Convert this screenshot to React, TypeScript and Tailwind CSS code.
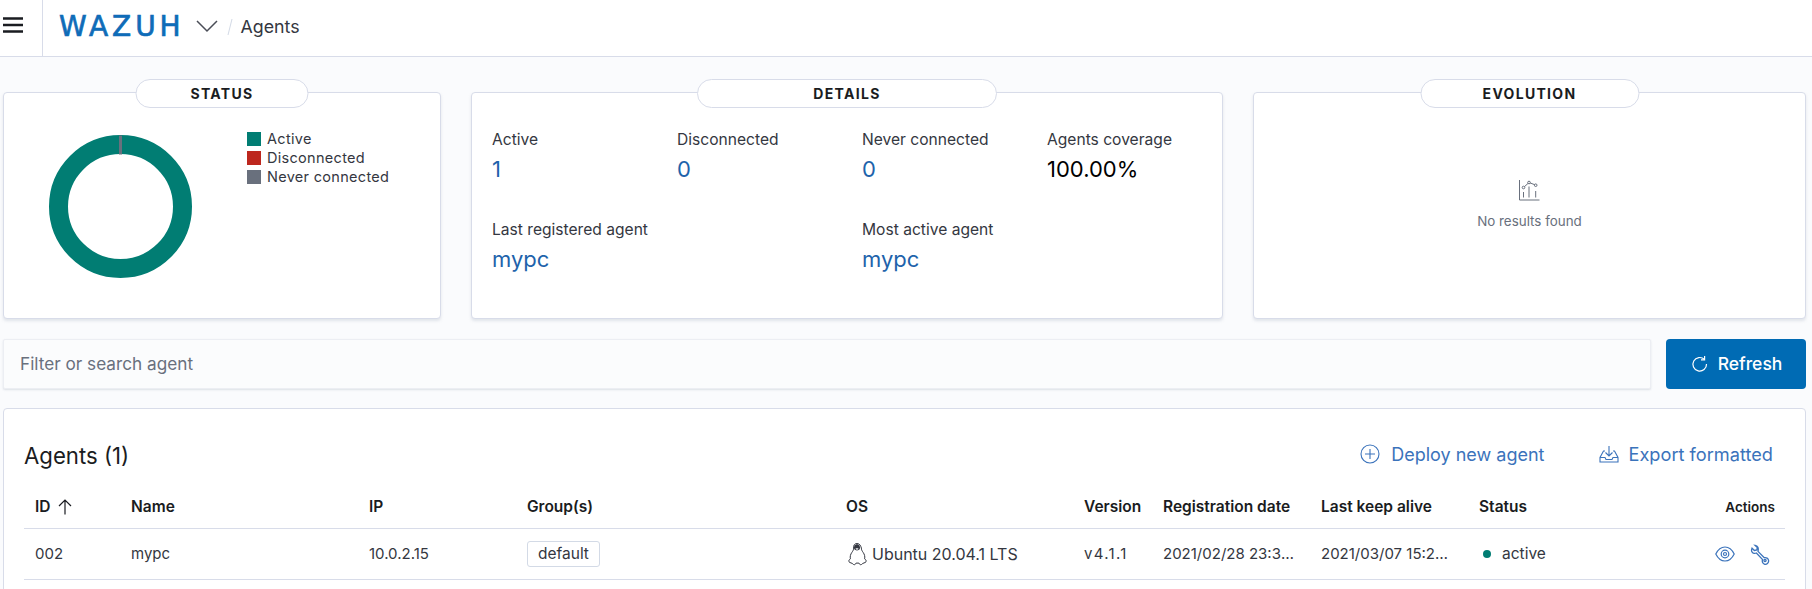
const font = { fontFamily: 'Inter, sans-serif' };

function Panel({ title, pill, width, children }: { title: string; pill: string; width: string; children?: React.ReactNode }) {
  return (
    <div className={`relative h-[227px] shrink-0 rounded-[4px] border border-[#d8dce9] bg-white shadow-[0_2px_3px_rgba(152,162,179,0.25)] ${width}`}>
      <div className={`absolute -top-[14px] left-1/2 flex h-[29px] -translate-x-1/2 items-center justify-center rounded-[15px] border border-[#d8dce9] bg-white text-[14px] font-bold tracking-[1.3px] text-[#1a1c21] ${pill}`}>
        {title}
      </div>
      {children}
    </div>
  );
}

function Stat({ label, value, dark }: { label: string; value: string; dark?: boolean }) {
  return (
    <div>
      <div className="text-[15.6px] leading-[20px] text-[#343741]">{label}</div>
      <div className={`mt-[4px] text-[22px] leading-[30px] ${dark ? 'text-black' : 'text-[#1e63ab]'}`}>{value}</div>
    </div>
  );
}

function Legend({ color, label }: { color: string; label: string }) {
  return (
    <div className="flex h-[19px] items-center gap-[6px]">
      <span className={`h-[14px] w-[14px] ${color}`} />
      <span className="text-[14.5px] tracking-[0.3px] text-[#343741]">{label}</span>
    </div>
  );
}

const cols = 'grid grid-cols-[96px_238px_158px_319px_238px_79px_158px_158px_1fr]';

export default function App() {
  return (
    <div className="h-[589px] w-[1812px] overflow-hidden bg-[#fafbfd]" style={font}>
      {/* Top bar */}
      <header className="flex h-[57px] items-center border-b border-[#d8dce9] bg-white">
        <div className="flex h-full w-[43px] items-center border-r border-[#d8dce9] pl-[3px] pb-[6px]">
          <svg width="20" height="16" viewBox="0 0 20 16">
            <path d="M0 1.5h20M0 8h20M0 14.5h20" stroke="#1a1c21" strokeWidth="2.4" />
          </svg>
        </div>
        <span className="ml-[16px] pb-[2px] text-[28px] leading-[30px] tracking-[3.9px] text-[#0f6cb8] [-webkit-text-stroke:0.7px_#0f6cb8]" style={{ fontFamily: '"DejaVu Sans", sans-serif' }}>
          WAZUH
        </span>
        <svg className="ml-[11px] mb-[3px]" width="22" height="13" viewBox="0 0 22 13">
          <path d="M1 1l10 10L21 1" fill="none" stroke="#4a4d57" strokeWidth="1.5" />
        </svg>
        <svg className="ml-[9px] mb-[2px]" width="6" height="18" viewBox="0 0 6 18">
          <path d="M5 1L1 17" stroke="#d3dae6" strokeWidth="1" />
        </svg>
        <span className="ml-[8px] pb-[1px] text-[17.8px] text-[#343741]">Agents</span>
      </header>

      {/* Panels */}
      <section className="mt-[35px] flex gap-[30px] pl-[3px]">
        <Panel title="STATUS" pill="w-[173px]" width="w-[438px]">
          <div className="flex pl-[45px] pt-[42px]">
            <svg width="143" height="143" viewBox="0 0 143 143">
              <circle cx="71.500" cy="71.500" r="62" fill="none" stroke="#017d73" strokeWidth="19" />
              <path d="M71.500 0.500v19" stroke="#69707d" strokeWidth="3" />
            </svg>
            <div className="ml-[55px] -mt-[6px]">
              <Legend color="bg-[#017d73]" label="Active" />
              <Legend color="bg-[#bd271e]" label="Disconnected" />
              <Legend color="bg-[#69707d]" label="Never connected" />
            </div>
          </div>
        </Panel>
        <Panel title="DETAILS" pill="w-[300px]" width="w-[752px]">
          <div className="pl-[20px] pt-[37px]">
            <div className="grid grid-cols-[185px_185px_185px_1fr]">
              <Stat label="Active" value="1" />
              <Stat label="Disconnected" value="0" />
              <Stat label="Never connected" value="0" />
              <Stat label="Agents coverage" value="100.00%" dark />
            </div>
            <div className="mt-[36px] grid grid-cols-[370px_1fr]">
              <Stat label="Last registered agent" value="mypc" />
              <Stat label="Most active agent" value="mypc" />
            </div>
          </div>
        </Panel>
        <Panel title="EVOLUTION" pill="w-[219px]" width="w-[553px]">
          <div className="flex flex-col items-center pt-[87px]">
            <svg width="21" height="21" viewBox="0 0 21 21" fill="none" stroke="#69707d" strokeWidth="1">
              <path d="M0.500 0v20H20.500" />
              <path d="M4.500 7.500l5.500-5 6.500 2.500" />
              <circle cx="4.500" cy="7.500" r="1.300" fill="white" />
              <circle cx="10" cy="2.500" r="1.300" fill="white" />
              <circle cx="16.700" cy="5.200" r="1.300" fill="white" />
              <path d="M4.500 12v5.500M10 6.500v11M16.700 11v6.500" />
            </svg>
            <div className="mt-[11px] text-[13.4px] leading-[18px] text-[#69707d]">No results found</div>
          </div>
        </Panel>
      </section>

      {/* Search */}
      <section className="mt-[20px] flex gap-[15px] pl-[3px]">
        <div className="flex h-[50px] w-[1648px] items-center rounded-[2px] border border-[#eceef3] bg-[#fbfcfd] pl-[16px] text-[17.2px] text-[#69707d] shadow-[0_1px_2px_rgba(152,162,179,0.3)]">
          Filter or search agent
        </div>
        <button className="flex h-[50px] w-[140px] items-center justify-center gap-[10px] rounded-[4px] bg-[#006bb4] text-[17.5px] font-medium text-white">
          <svg width="18" height="18" viewBox="0 0 18 18" fill="none" stroke="white" strokeWidth="1.2">
            <path d="M14.500 4.500a6.800 6.800 0 1 0 2 4.500" />
            <path d="M14.600 1v3.800h-3.600" />
          </svg>
          Refresh
        </button>
      </section>

      {/* Agents table */}
      <section className="ml-[3px] mt-[19px] h-[200px] w-[1803px] rounded-[4px] border border-[#d8dce9] bg-white px-[20px]">
        <div className="flex h-[88px] items-center justify-between pt-[6px]">
          <h2 className="text-[22.2px] text-[#1a1c21]">Agents (1)</h2>
          <div className="flex items-center gap-[54px] pr-[12px] pb-[3px] text-[18px] text-[#3b73bb]">
            <span className="flex items-center gap-[11px]">
              <svg width="20" height="20" viewBox="0 0 20 20" fill="none" stroke="#3b73bb" strokeWidth="1.1">
                <circle cx="10" cy="10" r="9" />
                <path d="M10 5v10M5 10h10" />
              </svg>
              Deploy new agent
            </span>
            <span className="flex items-center gap-[10px] text-[18.2px]">
              <svg width="20" height="18" viewBox="0 0 20 18" fill="none" stroke="#3b73bb" strokeWidth="1.1">
                <path d="M6 6H4.500L1 12.500V17h18v-4.500L15.500 6H14" />
                <path d="M1 12.500h5l1 2h6l1-2h5" />
                <path d="M10 1v10M6.500 7.500L10 11l3.500-3.500" />
              </svg>
              Export formatted
            </span>
          </div>
        </div>
        <div className={`${cols} h-[32px] items-start border-b border-[#d8dce9] text-[15.5px] font-semibold leading-[20px] text-[#1a1c21]`}>
          <span className="flex items-center gap-[7px] pl-[11px]">
            ID
            <svg width="14" height="16" viewBox="0 0 14 16" fill="none" stroke="#1a1c21" strokeWidth="1.2">
              <path d="M7 15.500V1M1 7l6-6 6 6" />
            </svg>
          </span>
          <span className="pl-[11px]">Name</span>
          <span className="pl-[11px]">IP</span>
          <span className="pl-[11px]">Group(s)</span>
          <span className="pl-[11px]">OS</span>
          <span className="pl-[11px]">Version</span>
          <span className="pl-[11px]">Registration date</span>
          <span className="pl-[11px]">Last keep alive</span>
          <div className="flex justify-between pl-[11px] pr-[10px]">
            <span>Status</span>
            <span className="text-[13.5px]">Actions</span>
          </div>
        </div>
        <div className={`${cols} h-[51px] items-center border-b border-[#d8dce9] text-[15px] text-[#343741]`}>
          <span className="pl-[11px]">002</span>
          <span className="pl-[11px]">mypc</span>
          <span className="pl-[11px]">10.0.2.15</span>
          <span className="pl-[11px]">
            <span className="inline-block rounded-[3px] border border-[#d3dae6] px-[10px] text-[15.5px] leading-[24px]">default</span>
          </span>
          <span className="flex items-center gap-[4px] pl-[11px] text-[16px]">
            <svg width="22" height="25" viewBox="0 0 22 24">
              <path d="M11 1c-2.600 0-3.600 2-3.400 4.600.1 1.600-.6 2.700-1.800 4.400C4.600 11.800 3.800 14 4.400 16.300c-.9.6-2 1.700-1.400 3 .8 1.300 3 .8 4.500 2.700 1 .7 2.200-.3 2.600-1.400h2.800c.4 1.100 1.600 2.100 2.600 1.400 1.500-1.900 3.700-1.400 4.500-2.700.6-1.300-.5-2.400-1.400-3 .6-2.300-.2-4.500-1.400-6.300-1.200-1.700-1.900-2.800-1.800-4.400C14.600 3 13.600 1 11 1z" fill="white" stroke="#343741" strokeWidth="1" />
              <path d="M8.300 3.500c-1 2.800.2 4.300 2.700 4.500 2.500-.2 3.700-1.700 2.700-4.500C12.700 1.300 9.300 1.300 8.300 3.500z" fill="#343741" />
              <path d="M9.300 6.200L11 7.400l1.700-1.200L11 5.400z" fill="#e8e9ec" />
            </svg>
            Ubuntu 20.04.1 LTS
          </span>
          <span className="pl-[11px] tracking-[1.3px]">v4.1.1</span>
          <span className="truncate pl-[11px] pr-[10px]">2021/02/28 23:38:14</span>
          <span className="truncate pl-[11px] pr-[16px]">2021/03/07 15:22:05</span>
          <div className="flex items-center justify-between pl-[15px] pr-[15px]">
            <span className="flex items-center gap-[11px] text-[15.5px]">
              <span className="h-[8px] w-[8px] rounded-full bg-[#017d73]" />
              active
            </span>
            <span className="flex items-center gap-[14px]">
              <svg width="20" height="16" viewBox="0 0 20 16" fill="none" stroke="#3b73bb" strokeWidth="1.2">
                <path d="M0.800 8C3 3.500 6.300 1 10 1s7 2.500 9.200 7c-2.200 4.500-5.500 7-9.200 7S3 12.500 0.800 8z" />
                <circle cx="10" cy="8" r="3.800" />
                <circle cx="10" cy="8" r="1.500" />
              </svg>
              <svg width="21" height="21" viewBox="0 0 21 21" fill="none" stroke="#3b73bb" strokeWidth="1.300">
                <path d="M6 1.300L8.300 3.600 7.800 6 5.400 6.500 3 4.200C2 6.500 2.700 8.800 5 9.300c1 .2 1.700 0 2.400-.3l6.200 6.600c-.8 1.800 0 3.900 1.700 4.500 2.300.8 4.700-1.200 4.300-3.600-.3-2.100-2.300-3.300-4.300-2.800L9 7.400C9.800 4.200 8.900 1.700 6 1.300z" />
                <circle cx="16" cy="16.500" r="1.100" />
              </svg>
            </span>
          </div>
        </div>
      </section>
    </div>
  );
}
